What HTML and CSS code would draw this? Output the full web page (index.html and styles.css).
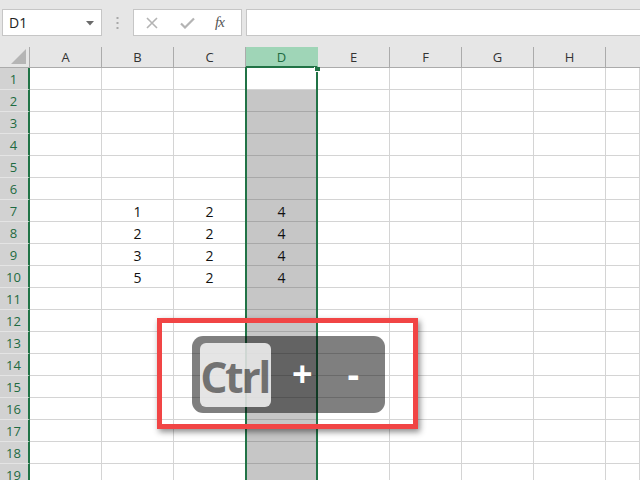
FILE: index.html
```html
<!DOCTYPE html>
<html>
<head>
<meta charset="utf-8">
<link rel="stylesheet" href="styles.css">
</head>
<body>
<div class="toolbar">
  <div class="namebox">
    <span class="ref">D1</span>
    <svg class="caret" width="8" height="5" viewBox="0 0 8 5"><path d="M0 0H8L4 4.5Z" fill="#6a6a6a"/></svg>
  </div>
  <div class="grip">
    <svg width="3" height="12" viewBox="0 0 3 12"><rect x="0.5" y="0" width="2" height="2" fill="#a8a8a8"/><rect x="0.5" y="5" width="2" height="2" fill="#a8a8a8"/><rect x="0.5" y="10" width="2" height="2" fill="#a8a8a8"/></svg>
  </div>
  <div class="fxbox">
    <svg class="btn" width="12" height="12" viewBox="0 0 12 12"><path d="M1 1L11 11M11 1L1 11" stroke="#b4b4b4" stroke-width="1.6" fill="none"/></svg>
    <svg class="btn" width="15" height="12" viewBox="0 0 15 12"><path d="M1 6.5L5 10.5L14 1.5" stroke="#b4b4b4" stroke-width="2.2" fill="none"/></svg>
    <span class="fx">fx</span>
  </div>
  <div class="formula"></div>
</div>

<div class="sheet">
  <div class="grid">
    <div class="corner"><svg width="15" height="15" viewBox="0 0 15 15"><path d="M15 0V15H0Z" fill="#b5b5b5"/></svg></div>
    <div class="ch">A</div><div class="ch">B</div><div class="ch">C</div><div class="ch sel">D</div><div class="ch">E</div><div class="ch">F</div><div class="ch">G</div><div class="ch">H</div><div class="ch last"></div>

    <div class="rh">1</div><div class="c"></div><div class="c"></div><div class="c"></div><div class="c d active"></div><div class="c"></div><div class="c"></div><div class="c"></div><div class="c"></div><div class="c"></div>
    <div class="rh">2</div><div class="c"></div><div class="c"></div><div class="c"></div><div class="c d"></div><div class="c"></div><div class="c"></div><div class="c"></div><div class="c"></div><div class="c"></div>
    <div class="rh">3</div><div class="c"></div><div class="c"></div><div class="c"></div><div class="c d"></div><div class="c"></div><div class="c"></div><div class="c"></div><div class="c"></div><div class="c"></div>
    <div class="rh">4</div><div class="c"></div><div class="c"></div><div class="c"></div><div class="c d"></div><div class="c"></div><div class="c"></div><div class="c"></div><div class="c"></div><div class="c"></div>
    <div class="rh">5</div><div class="c"></div><div class="c"></div><div class="c"></div><div class="c d"></div><div class="c"></div><div class="c"></div><div class="c"></div><div class="c"></div><div class="c"></div>
    <div class="rh">6</div><div class="c"></div><div class="c"></div><div class="c"></div><div class="c d"></div><div class="c"></div><div class="c"></div><div class="c"></div><div class="c"></div><div class="c"></div>
    <div class="rh">7</div><div class="c"></div><div class="c">1</div><div class="c">2</div><div class="c d">4</div><div class="c"></div><div class="c"></div><div class="c"></div><div class="c"></div><div class="c"></div>
    <div class="rh">8</div><div class="c"></div><div class="c">2</div><div class="c">2</div><div class="c d">4</div><div class="c"></div><div class="c"></div><div class="c"></div><div class="c"></div><div class="c"></div>
    <div class="rh">9</div><div class="c"></div><div class="c">3</div><div class="c">2</div><div class="c d">4</div><div class="c"></div><div class="c"></div><div class="c"></div><div class="c"></div><div class="c"></div>
    <div class="rh">10</div><div class="c"></div><div class="c">5</div><div class="c">2</div><div class="c d">4</div><div class="c"></div><div class="c"></div><div class="c"></div><div class="c"></div><div class="c"></div>
    <div class="rh">11</div><div class="c"></div><div class="c"></div><div class="c"></div><div class="c d"></div><div class="c"></div><div class="c"></div><div class="c"></div><div class="c"></div><div class="c"></div>
    <div class="rh">12</div><div class="c"></div><div class="c"></div><div class="c"></div><div class="c d"></div><div class="c"></div><div class="c"></div><div class="c"></div><div class="c"></div><div class="c"></div>
    <div class="rh">13</div><div class="c"></div><div class="c"></div><div class="c"></div><div class="c d"></div><div class="c"></div><div class="c"></div><div class="c"></div><div class="c"></div><div class="c"></div>
    <div class="rh">14</div><div class="c"></div><div class="c"></div><div class="c"></div><div class="c d"></div><div class="c"></div><div class="c"></div><div class="c"></div><div class="c"></div><div class="c"></div>
    <div class="rh">15</div><div class="c"></div><div class="c"></div><div class="c"></div><div class="c d"></div><div class="c"></div><div class="c"></div><div class="c"></div><div class="c"></div><div class="c"></div>
    <div class="rh">16</div><div class="c"></div><div class="c"></div><div class="c"></div><div class="c d"></div><div class="c"></div><div class="c"></div><div class="c"></div><div class="c"></div><div class="c"></div>
    <div class="rh">17</div><div class="c"></div><div class="c"></div><div class="c"></div><div class="c d"></div><div class="c"></div><div class="c"></div><div class="c"></div><div class="c"></div><div class="c"></div>
    <div class="rh">18</div><div class="c"></div><div class="c"></div><div class="c"></div><div class="c d"></div><div class="c"></div><div class="c"></div><div class="c"></div><div class="c"></div><div class="c"></div>
    <div class="rh">19</div><div class="c"></div><div class="c"></div><div class="c"></div><div class="c d"></div><div class="c"></div><div class="c"></div><div class="c"></div><div class="c"></div><div class="c"></div>
  </div>

  <div class="selection"><div class="handle"></div></div>

  <div class="callout">
    <div class="keys">
      <div class="key">Ctrl</div>
      <span class="plus">+</span>
      <span class="minus">-</span>
    </div>
  </div>
</div>
</body>
</html>
```

FILE: styles.css
```css
* { box-sizing: border-box; }

html, body {
  margin: 0;
  padding: 0;
  width: 640px;
  height: 480px;
  overflow: hidden;
  background: #e6e6e6;
  font-family: "Open Sans", "Noto Sans", sans-serif;
}

.toolbar {
  height: 47px;
  display: flex;
  align-items: flex-start;
  padding: 9px 0 0 2px;
  background: #e6e6e6;
}

.namebox {
  width: 100px;
  height: 27px;
  background: #fff;
  border: 1px solid #c6c6c6;
  display: flex;
  align-items: center;
  justify-content: space-between;
  padding: 0 7px 0 6px;
}

.ref {
  font-size: 14px;
  color: #222;
}

.caret { margin-top: 1px; }

.grip {
  width: 31px;
  height: 27px;
  display: flex;
  align-items: center;
  justify-content: center;
}

.fxbox {
  width: 109px;
  height: 27px;
  background: #fff;
  border: 1px solid #c6c6c6;
  display: flex;
  align-items: center;
  padding-left: 12px;
}

.fxbox .btn:first-child { margin-right: 22px; }
.fxbox .btn:nth-child(2) { margin-right: 20px; }

.fx {
  font-family: "Liberation Serif", serif;
  font-style: italic;
  font-size: 15px;
  color: #555;
  letter-spacing: -1px;
}

.formula {
  flex: 1;
  height: 27px;
  margin-left: 4px;
  background: #fff;
  border-top: 1px solid #c6c6c6;
  border-bottom: 1px solid #c6c6c6;
  border-left: 1px solid #c6c6c6;
}

.sheet {
  position: relative;
  height: 433px;
  overflow: hidden;
  background: #fff;
}

.grid {
  display: grid;
  grid-template-columns: 30px repeat(8, 72px) 1fr;
  grid-template-rows: 21px repeat(19, 22px);
}

.corner {
  background: #e6e6e6;
  border-right: 1px solid #ababab;
  border-bottom: 1px solid #ababab;
  display: flex;
  align-items: flex-end;
  justify-content: flex-end;
  padding: 0 3px 3px 0;
}

.ch {
  background: #e6e6e6;
  border-right: 1px solid #ababab;
  border-bottom: 1px solid #ababab;
  font-size: 13px;
  color: #333;
  display: flex;
  align-items: center;
  justify-content: center;
}

.ch.sel {
  background: #9fd5b7;
  color: #1e6b41;
  border-right-color: #9fd5b7;
  border-bottom: 2px solid #217346;
}

.ch.last { border-right: none; }

.rh {
  background: #d2d2d2;
  border-right: 2px solid #217346;
  border-bottom: 1px solid #e4e4e4;
  font-size: 13px;
  color: #1e6b41;
  display: flex;
  align-items: center;
  justify-content: center;
  padding-right: 1px;
}

.c {
  border-right: 1px solid #d4d4d4;
  border-bottom: 1px solid #d4d4d4;
  font-size: 14px;
  color: #111;
  display: flex;
  align-items: center;
  justify-content: center;
  padding-top: 1px;
}

.c.d {
  background: #c6c6c6;
  border-bottom-color: #a8a8a8;
}

.c.d.active {
  background: #fff;
  border-bottom-color: #d4d4d4;
}

.selection {
  position: absolute;
  left: 245px;
  top: 20px;
  width: 73px;
  height: 420px;
  border-left: 2px solid #217346;
  border-right: 2px solid #217346;
}

.handle {
  position: absolute;
  right: -4px;
  top: 0;
  width: 6px;
  height: 5px;
  background: #217346;
  border-left: 1px solid #fff;
  border-bottom: 1px solid #fff;
}

.callout {
  position: absolute;
  left: 157px;
  top: 271px;
  width: 261px;
  height: 111px;
  border: 5px solid #f14545;
  box-shadow: 2px 3px 6px rgba(0, 0, 0, 0.45);
  padding: 13px 0 0 30px;
}

.keys {
  width: 193px;
  height: 77px;
  border-radius: 11px;
  background: rgba(0, 0, 0, 0.5);
  display: flex;
  align-items: center;
  padding-left: 8px;
}

.key {
  width: 71px;
  height: 64px;
  border-radius: 6px;
  background: rgba(255, 255, 255, 0.8);
  color: rgba(0, 0, 0, 0.5);
  font-weight: 700;
  font-size: 43px;
  letter-spacing: -2.5px;
  display: flex;
  align-items: center;
  justify-content: center;
  line-height: 1;
  padding: 3px 2px 0 0;
  white-space: nowrap;
}

.plus, .minus {
  color: #fff;
  font-weight: 700;
  font-size: 36px;
  line-height: 1;
  padding-bottom: 2px;
}

.plus { margin-left: 21px; }
.minus { margin-left: 35px; }
```
